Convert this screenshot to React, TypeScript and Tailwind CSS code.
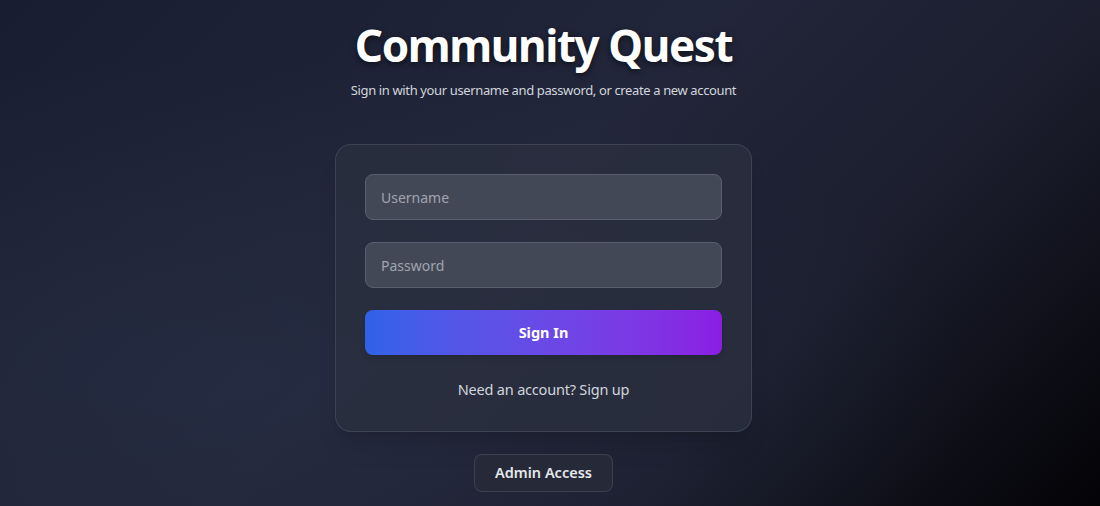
export default function App() {
  return (
    <div className="min-h-screen w-full bg-[radial-gradient(ellipse_at_20%_75%,rgba(40,48,70,0.55),transparent_60%),linear-gradient(135deg,#191d31_0%,#22263a_45%,#1c1e2e_70%,#030306_100%)] font-['Noto_Sans','Open_Sans',sans-serif] text-white">
      <div className="flex flex-col items-center pr-[13px] pt-[16px]">
        <h1 className="whitespace-nowrap text-[44px] font-bold leading-[58px] tracking-[-1.4px] text-white [text-shadow:0_2px_6px_rgba(0,0,0,0.6)]">
          Community Quest
        </h1>
        <p className="mt-[6px] whitespace-nowrap text-[13px] leading-[20px] tracking-[-0.37px] text-gray-300">
          Sign in with your username and password, or create a new account
        </p>

        <div className="mt-[44px] w-[417px] rounded-2xl border border-white/10 bg-[#2a2f40]/80 p-[29px] shadow-xl">
          <div className="flex flex-col gap-[22px]">
            <input
              placeholder="Username"
              className="h-[46px] w-full rounded-lg border border-[#5a5f6f] bg-[#434857] px-[15px] text-[14px] text-white placeholder:text-[#a0a4ae] outline-none"
            />
            <input
              type="password"
              placeholder="Password"
              className="h-[46px] w-full rounded-lg border border-[#5a5f6f] bg-[#434857] px-[15px] text-[14px] text-white placeholder:text-[#a0a4ae] outline-none"
            />
            <button className="h-[45px] w-full rounded-lg bg-gradient-to-r from-[#2f62e9] to-[#8b1de3] text-[14.5px] font-bold text-white shadow-md">
              Sign In
            </button>
          </div>
          <div className="mt-[23px] mb-[2px] text-center text-[14.5px] leading-[22px] tracking-[-0.2px] text-gray-300">
            Need an account? Sign up
          </div>
        </div>

        <button className="mt-[22px] h-[38px] rounded-lg border border-white/10 bg-[#262a38] px-[20px] text-[14.5px] font-semibold text-gray-200">
          Admin Access
        </button>
      </div>
    </div>
  );
}
